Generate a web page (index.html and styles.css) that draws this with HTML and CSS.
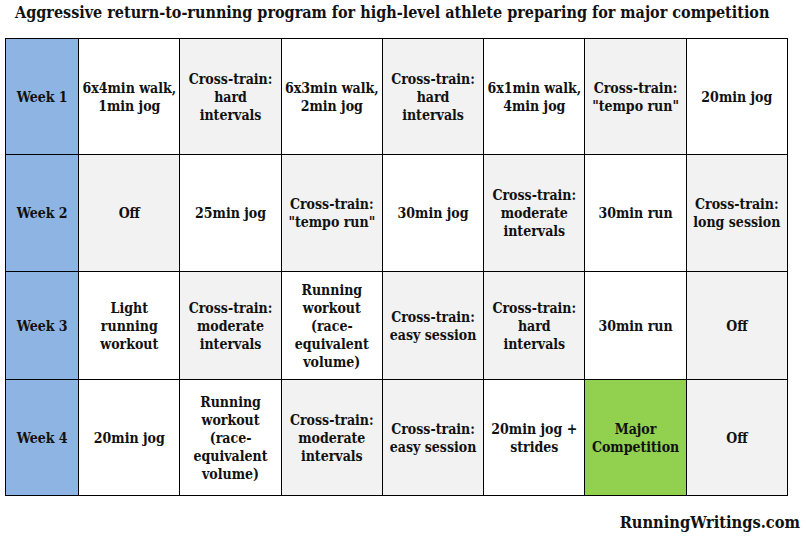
FILE: index.html
```html
<!DOCTYPE html>
<html>
<head>
<meta charset="utf-8">
<link rel="stylesheet" href="styles.css">
</head>
<body>
<div class="page">
  <h1 class="title">Aggressive return-to-running program for high-level athlete preparing for major competition</h1>
  <table class="plan">
    <colgroup>
      <col class="c-week"><col class="c-day"><col class="c-day"><col class="c-day"><col class="c-day"><col class="c-day"><col class="c-day"><col class="c-day">
    </colgroup>
    <tr class="r1">
      <th class="week">Week 1</th>
      <td>6x4min walk,<br>1min jog</td>
      <td class="grey">Cross-train:<br>hard<br>intervals</td>
      <td>6x3min walk,<br>2min jog</td>
      <td class="grey">Cross-train:<br>hard<br>intervals</td>
      <td>6x1min walk,<br>4min jog</td>
      <td class="grey">Cross-train:<br>"tempo run"</td>
      <td>20min jog</td>
    </tr>
    <tr class="r2">
      <th class="week">Week 2</th>
      <td class="grey">Off</td>
      <td>25min jog</td>
      <td class="grey">Cross-train:<br>"tempo run"</td>
      <td>30min jog</td>
      <td class="grey">Cross-train:<br>moderate<br>intervals</td>
      <td>30min run</td>
      <td class="grey">Cross-train:<br>long session</td>
    </tr>
    <tr class="r3">
      <th class="week">Week 3</th>
      <td>Light<br>running<br>workout</td>
      <td class="grey">Cross-train:<br>moderate<br>intervals</td>
      <td>Running<br>workout<br>(race-<br>equivalent<br>volume)</td>
      <td class="grey">Cross-train:<br>easy session</td>
      <td class="grey">Cross-train:<br>hard<br>intervals</td>
      <td>30min run</td>
      <td class="grey">Off</td>
    </tr>
    <tr class="r4">
      <th class="week">Week 4</th>
      <td>20min jog</td>
      <td>Running<br>workout<br>(race-<br>equivalent<br>volume)</td>
      <td class="grey">Cross-train:<br>moderate<br>intervals</td>
      <td class="grey">Cross-train:<br>easy session</td>
      <td>20min jog +<br>strides</td>
      <td class="green">Major<br>Competition</td>
      <td class="grey">Off</td>
    </tr>
  </table>
  <div class="credit">RunningWritings.com</div>
</div>
</body>
</html>
```
FILE: styles.css
```css
html, body {
  margin: 0;
  padding: 0;
  background: #ffffff;
}
.page {
  width: 806px;
  height: 537px;
  font-family: "DejaVu Serif Condensed", "DejaVu Serif", serif;
  font-weight: bold;
  color: #111111;
}
.title {
  margin: 0;
  padding: 3px 0 0 15px;
  height: 38px;
  box-sizing: border-box;
  font-size: 16px;
  line-height: 20px;
  font-weight: bold;
  white-space: nowrap;
}
.plan {
  margin-left: 5px;
  border-collapse: collapse;
  table-layout: fixed;
  width: 783px;
}
.c-week { width: 73px; }
.c-day { width: 101px; }
.plan th, .plan td {
  border: 1px solid #000000;
  padding: 0 2px;
  text-align: center;
  vertical-align: middle;
  font-size: 14px;
  line-height: 18px;
  font-weight: bold;
  background: #ffffff;
}
.plan th.week { background: #8eb4e3; }
.plan td.grey { background: #f2f2f2; }
.plan td.green { background: #92d050; }
.r1 { height: 116px; }
.r2 { height: 117px; }
.r3 { height: 108px; }
.r4 { height: 116px; }
.credit {
  text-align: right;
  padding: 16px 6px 0 0;
  font-size: 16.3px;
  line-height: 22px;
}
```
